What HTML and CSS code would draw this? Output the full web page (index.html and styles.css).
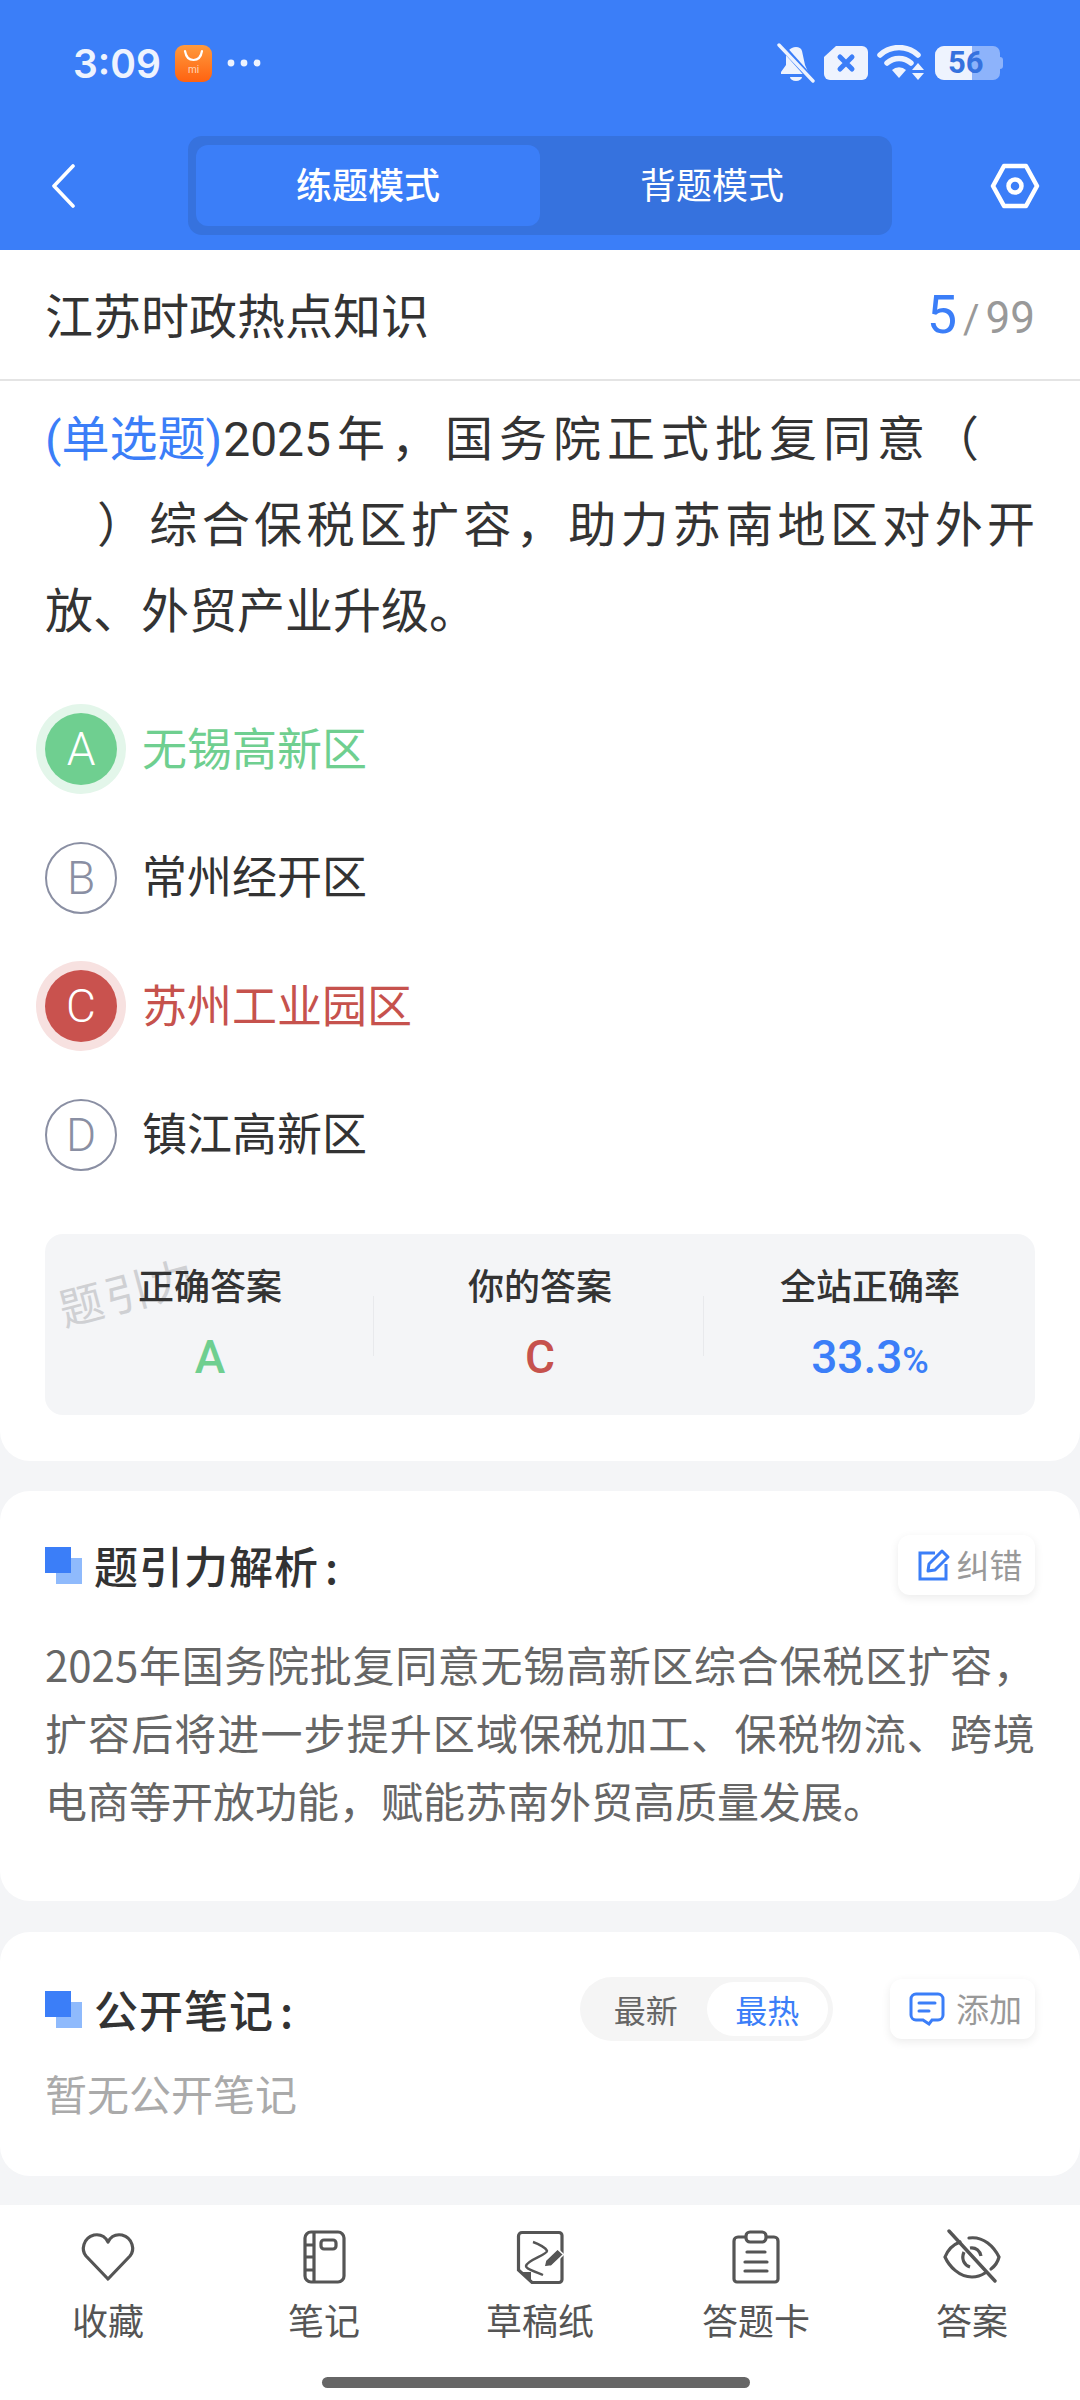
FILE: index.html
```html
<!DOCTYPE html>
<html lang="zh">
  <head>
    <meta charset="utf-8" />
    <title>练题模式</title>
    <link rel="stylesheet" href="styles.css">
  </head>
  <body>
    <div class="page">
      <header class="header">
        <div class="status">
          <div class="status-left">
            <span class="time">3:09</span>
            <svg class="mi-icon" width="37" height="37" viewBox="0 0 37 37">
              <defs>
                <linearGradient id="miGrad" x1="0" y1="0" x2="0" y2="1">
                  <stop offset="0" stop-color="#ff9a3d"/>
                  <stop offset="1" stop-color="#ff6210"/>
                </linearGradient>
              </defs>
              <rect width="37" height="37" rx="9" fill="url(#miGrad)"/>
              <path d="M10 6c1 6 4 9 8.500 9s7.500-3 8.500-9" fill="none" stroke="#fff" stroke-width="2.200" stroke-linecap="round"/>
              <text class="mi-text" x="18.500" y="28" text-anchor="middle">mi</text>
            </svg>
            <svg class="dots" width="34" height="8" viewBox="0 0 34 8"><circle cx="4" cy="4" r="3.400" fill="#eef3fe"/><circle cx="17" cy="4" r="3.400" fill="#eef3fe"/><circle cx="30" cy="4" r="3.400" fill="#eef3fe"/></svg>
          </div>
          <div class="status-right">
            <svg width="38" height="40" viewBox="0 0 38 40">
              <path d="M19 4c-6 0-10 5-10 11v7l-5 7v2h24l4 0-4-9-3-14c-1-3-3-4-6-4z" fill="#eef3fe"/>
              <path d="M13 34a6 4 0 0 0 12 0z" fill="#eef3fe"/>
              <path d="M3 1l33 37" stroke="#3b7ef8" stroke-width="6"/>
              <path d="M2 2l34 36" stroke="#eef3fe" stroke-width="3.400" stroke-linecap="round"/>
            </svg>
            <svg width="44" height="34" viewBox="0 0 44 34">
              <path d="M12 0h26a6 6 0 0 1 6 6v22a6 6 0 0 1-6 6H6a6 6 0 0 1-6-6V11z" fill="#eef3fe"/>
              <path d="M16 11l12 12M28 11L16 23" stroke="#3b7ef8" stroke-width="5" stroke-linecap="round"/>
            </svg>
            <svg width="48" height="36" viewBox="0 0 48 36">
              <path d="M3 10a28 28 0 0 1 38 0" fill="none" stroke="#eef3fe" stroke-width="5.500" stroke-linecap="round"/>
              <path d="M10 18a18 18 0 0 1 24 0" fill="none" stroke="#eef3fe" stroke-width="5.500" stroke-linecap="round"/>
              <path d="M15 25a10 10 0 0 1 14 0l-7 8z" fill="#eef3fe"/>
              <path d="M41 18l6 7H35zM35 28h12l-6 7z" fill="#eef3fe"/>
            </svg>
            <div class="battery">
              <div class="battery-level"></div>
              <span class="battery-num">56</span>
              <div class="battery-cap"></div>
            </div>
          </div>
        </div>
        <div class="nav">
          <svg class="back" width="26" height="44" viewBox="0 0 26 44"><path d="M23 2L4 22l19 20" fill="none" stroke="#fff" stroke-width="3.600" stroke-linecap="round" stroke-linejoin="round"/></svg>
          <div class="tabs">
            <div class="tab tab-active">练题模式</div>
            <div class="tab">背题模式</div>
          </div>
          <svg class="setting" width="50" height="46" viewBox="0 0 50 46">
            <path d="M14 3h22l11 20-11 20H14L3 23z" fill="none" stroke="#fff" stroke-width="4.500" stroke-linejoin="round"/>
            <circle cx="25" cy="23" r="6.500" fill="none" stroke="#fff" stroke-width="4.500"/>
          </svg>
        </div>
      </header>

      <section class="card card-question">
        <div class="title-row">
          <div class="title">江苏时政热点知识</div>
          <div class="count"><span class="count-now">5</span><span class="count-slash">/</span>99</div>
        </div>
        <div class="question">
          <div class="q-line q-justify q-first"><span class="q-tag">(单选题)</span><span class="q-num">2025</span>年，国务院正式批复同意（</div>
          <div class="q-line q-justify q-second">）综合保税区扩容，助力苏南地区对外开</div>
          <div class="q-line">放、外贸产业升级。</div>
        </div>
        <div class="options">
          <div class="option option-right"><span class="letter">A</span><span class="option-text">无锡高新区</span></div>
          <div class="option"><span class="letter">B</span><span class="option-text">常州经开区</span></div>
          <div class="option option-wrong"><span class="letter">C</span><span class="option-text">苏州工业园区</span></div>
          <div class="option"><span class="letter">D</span><span class="option-text">镇江高新区</span></div>
        </div>
        <div class="answer-box">
          <div class="watermark">题引力</div>
          <div class="answer-col">
            <div class="answer-label">正确答案</div>
            <div class="answer-value green">A</div>
          </div>
          <div class="answer-col">
            <div class="answer-label">你的答案</div>
            <div class="answer-value red">C</div>
          </div>
          <div class="answer-col">
            <div class="answer-label">全站正确率</div>
            <div class="answer-value blue">33.3<span class="percent">%</span></div>
          </div>
        </div>
      </section>

      <section class="card card-analysis">
        <div class="section-head">
          <div class="section-icon"><i class="sq-light"></i><i class="sq-dark"></i></div>
          <div class="section-title">题引力解析<span class="colon">:</span></div>
          <div class="mini-btn mini-btn-fix">
            <svg width="34" height="34" viewBox="0 0 34 34">
              <path d="M18 5H3v26h26V16" fill="none" stroke="#3b7ef8" stroke-width="3"/>
              <path d="M11 23l1-7L25 3l6 6-13 13z" fill="none" stroke="#3b7ef8" stroke-width="3" stroke-linejoin="round"/>
            </svg>
            <span class="mini-text">纠错</span>
          </div>
        </div>
        <p class="analysis">2025年国务院批复同意无锡高新区综合保税区扩容，扩容后将进一步提升区域保税加工、保税物流、跨境电商等开放功能，赋能苏南外贸高质量发展。</p>
      </section>

      <section class="card card-notes">
        <div class="section-head">
          <div class="section-icon"><i class="sq-light"></i><i class="sq-dark"></i></div>
          <div class="section-title">公开笔记<span class="colon">:</span></div>
          <div class="switch">
            <span class="switch-item">最新</span>
            <span class="switch-item switch-active">最热</span>
          </div>
          <div class="mini-btn mini-btn-add">
            <svg width="36" height="34" viewBox="0 0 36 34">
              <path d="M7 2h22a5 5 0 0 1 5 5v16a5 5 0 0 1-5 5h-6l-3 4-6-4H7a5 5 0 0 1-5-5V7a5 5 0 0 1 5-5z" fill="none" stroke="#3b7ef8" stroke-width="3"/>
              <path d="M10 11h16M10 19h10" stroke="#3b7ef8" stroke-width="3" stroke-linecap="round"/>
            </svg>
            <span class="mini-text">添加</span>
          </div>
        </div>
        <div class="empty">暂无公开笔记</div>
      </section>

      <nav class="bottom">
        <div class="bottom-items">
          <div class="bottom-item">
            <svg width="56" height="56" viewBox="0 0 56 56">
              <path d="M28 50L6 27C1 21 3 9 14 6c6-1 11 1 14 7 3-6 8-8 14-7 11 3 13 15 8 21z" fill="none" stroke="#555" stroke-width="3.200" stroke-linejoin="round"/>
            </svg>
            <span>收藏</span>
          </div>
          <div class="bottom-item">
            <svg width="56" height="56" viewBox="0 0 56 56">
              <rect x="9" y="3" width="39" height="50" rx="6" fill="none" stroke="#555" stroke-width="3.200"/>
              <path d="M18 3v50M9 16h9M9 28h9M9 41h9" fill="none" stroke="#555" stroke-width="3.200"/>
              <rect x="25" y="11" width="15" height="9" rx="3" fill="none" stroke="#555" stroke-width="3.200"/>
            </svg>
            <span>笔记</span>
          </div>
          <div class="bottom-item">
            <svg width="56" height="56" viewBox="0 0 56 56">
              <path d="M10 3.500h37a3 3 0 0 1 3 3v44a3 3 0 0 1-3 3H20L6.500 41V7a3.500 3.500 0 0 1 3.500-3.500z" fill="none" stroke="#555" stroke-width="3.200"/>
              <path d="M9 43h10v9z" fill="#555"/>
              <path d="M21 13c6 2 13 6 14 9 0 4-20 9-21 15 0 3 10 6 17 9" fill="none" stroke="#555" stroke-width="2.400"/>
              <path d="M32 38l1.500-6.500L45.500 20l6 5.500-12 11.500z" fill="#555" stroke="#fff" stroke-width="1.500"/>
            </svg>
            <span>草稿纸</span>
          </div>
          <div class="bottom-item">
            <svg width="56" height="56" viewBox="0 0 56 56">
              <path d="M17 8h-7a4 4 0 0 0-4 4v38a3 3 0 0 0 3 3h38a3 3 0 0 0 3-3V12a4 4 0 0 0-4-4h-7" fill="none" stroke="#555" stroke-width="3.200" stroke-linecap="round"/>
              <rect x="18" y="3" width="20" height="10" rx="4" fill="none" stroke="#555" stroke-width="3.200"/>
              <path d="M19 23h18M17 33h22M17 42h22" stroke="#555" stroke-width="3.200" stroke-linecap="round"/>
            </svg>
            <span>答题卡</span>
          </div>
          <div class="bottom-item">
            <svg width="58" height="56" viewBox="0 0 58 56">
              <path d="M17 13C9 16 4 23 2 28c4 9 14 20 27 20 5 0 10-2 13-4M26 9c15-2 25 9 30 19-1 4-4 9-8 12" fill="none" stroke="#555" stroke-width="3.200" stroke-linecap="round"/>
              <path d="M21 23c-3 7 0 13 6 15M27 19c6-1 10 3 11 8" fill="none" stroke="#555" stroke-width="3.200"/>
              <path d="M6 2l46 50" stroke="#555" stroke-width="3.400" stroke-linecap="round"/>
            </svg>
            <span>答案</span>
          </div>
        </div>
        <div class="home-bar"></div>
      </nav>
    </div>
  </body>
</html>
```
FILE: styles.css
```css
* {
  box-sizing: border-box;
}

body {
  margin: 0;
  background-color: #f4f5f7;
  font-family: "Noto Sans CJK SC", Roboto, sans-serif;
  color: #333333;
}

.page {
  width: 1080px;
  height: 2400px;
  overflow: hidden;
  display: flex;
  flex-direction: column;
}

.header {
  height: 250px;
  background-color: #3b7ef8;
}

.status {
  height: 136px;
  padding: 44px 80px 0 73px;
  display: flex;
  justify-content: space-between;
  align-items: flex-start;
}

.status-left {
  display: flex;
  align-items: center;
  height: 38px;
  gap: 15px;
}

.time {
  font-family: Inter, Roboto, sans-serif;
  font-size: 39px;
  font-weight: 600;
  color: #eef3fe;
  width: 87px;
}

.mi-text {
  font-family: Roboto, sans-serif;
  font-size: 10px;
  fill: #ffd9bd;
}

.status-right {
  display: flex;
  align-items: center;
  height: 38px;
  gap: 9px;
}

.battery {
  position: relative;
  width: 65px;
  height: 34px;
  border-radius: 9px 7px 7px 9px;
  background-color: #8db3fb;
  margin-left: 1px;
}

.battery-level {
  width: 37px;
  height: 34px;
  border-radius: 9px 0 0 9px;
  background-color: #eef3fe;
}

.battery-num {
  position: absolute;
  left: 13px;
  top: 0;
  line-height: 34px;
  font-family: Roboto, sans-serif;
  font-size: 31px;
  font-weight: 700;
  color: #3672de;
}

.battery-cap {
  position: absolute;
  right: -3px;
  top: 11px;
  width: 3px;
  height: 12px;
  border-radius: 0 3px 3px 0;
  background-color: #8db3fb;
}

.nav {
  height: 99px;
  padding: 0 40px 0 50px;
  display: flex;
  align-items: center;
  justify-content: space-between;
}

.tabs {
  width: 704px;
  height: 99px;
  margin-left: 14px;
  padding: 9px 8px;
  display: flex;
  background-color: #3672de;
  border-radius: 14px;
}

.tab {
  flex: 1;
  display: flex;
  align-items: center;
  justify-content: center;
  padding-bottom: 5px;
  border-radius: 12px;
  font-size: 36px;
  font-weight: 400;
  color: #ffffff;
}

.tab-active {
  background-color: #3b7ef8;
  font-weight: 500;
}

.card {
  background-color: #ffffff;
  border-radius: 30px;
}

.card-question {
  height: 1211px;
  border-radius: 0 0 30px 30px;
}

.title-row {
  height: 131px;
  padding: 0 45px;
  display: flex;
  align-items: center;
  justify-content: space-between;
  border-bottom: 2px solid #e4e4e4;
}

.title {
  margin-bottom: 3px;
  font-size: 48px;
  color: #333333;
}

.count {
  font-family: Roboto, sans-serif;
  font-size: 44px;
  color: #999999;
}

.count-now {
  font-size: 54px;
  color: #3b7ef8;
}

.count-slash {
  margin: 0 6px;
  font-size: 40px;
}

.question {
  padding: 16px 45px 0;
  font-size: 48px;
  line-height: 86px;
  font-family: Roboto, "Noto Sans CJK SC", sans-serif;
}

.q-line {
  height: 86px;
  white-space: pre-wrap;
}

.q-justify {
  text-align: justify;
  text-align-last: justify;
}

.q-first {
  padding-right: 56px;
}

.q-second {
  padding-left: 52px;
}

.q-tag {
  display: inline-block;
  margin-right: -3px;
  color: #3b7ef8;
}

.q-num {
  display: inline-block;
  margin-left: 4px;
}

.options {
  margin-top: 30px;
}

.option {
  height: 128.5px;
  padding-left: 45px;
  display: flex;
  align-items: center;
  gap: 25px;
  font-size: 45px;
  color: #333333;
}

.option-text {
  margin-bottom: 6px;
}

.letter {
  width: 72px;
  height: 72px;
  display: flex;
  align-items: center;
  justify-content: center;
  border-radius: 50%;
  border: 2px solid #8a8fa3;
  font-family: Roboto, sans-serif;
  font-size: 46px;
  font-weight: 300;
  color: #8a8fa3;
}

.option-right {
  color: #6fcf90;
}

.option-right .letter {
  border: 0;
  background-color: #6fcf90;
  box-shadow: 0 0 0 9px #e3f6ea;
  color: #ffffff;
}

.option-wrong {
  color: #c6524d;
}

.option-wrong .letter {
  border: 0;
  background-color: #c9524e;
  box-shadow: 0 0 0 9px #f7e1e0;
  color: #ffffff;
}

.answer-box {
  position: relative;
  height: 181px;
  margin: 35px 45px 0;
  display: flex;
  background-color: #f4f5f7;
  border-radius: 18px;
}

.watermark {
  position: absolute;
  left: 12px;
  top: 24px;
  font-size: 44px;
  letter-spacing: 3px;
  color: #cfd0d3;
  transform: rotate(-15deg);
}

.answer-col {
  position: relative;
  flex: 1;
  display: flex;
  flex-direction: column;
  align-items: center;
  padding-top: 23px;
}

.answer-col + .answer-col::before {
  content: "";
  position: absolute;
  left: -2px;
  top: 62px;
  width: 1px;
  height: 60px;
  background-color: #e8e9ec;
}

.answer-label {
  font-size: 36px;
  line-height: 54px;
  font-weight: 500;
  color: #333333;
}

.answer-value {
  margin-top: 19px;
  font-family: Roboto, sans-serif;
  font-size: 46px;
  line-height: 54px;
  font-weight: 500;
}

.green {
  color: #6fcf90;
}

.red {
  color: #c6524d;
}

.blue {
  color: #3b7ef8;
}

.percent {
  font-size: 36px;
}

.card-analysis {
  height: 410px;
  margin-top: 30px;
  padding: 0 45px;
}

.section-head {
  height: 60px;
  display: flex;
  align-items: center;
}

.card-analysis .section-head {
  margin-top: 44px;
}

.card-notes .section-head {
  margin-top: 47px;
}

.section-icon {
  position: relative;
  width: 37px;
  height: 37px;
  margin-right: 12px;
}

.section-icon i {
  position: absolute;
  width: 26px;
  height: 26px;
}

.sq-dark {
  left: 0;
  top: 0;
  background-color: #3b7ef8;
}

.sq-light {
  left: 11px;
  top: 11px;
  background-color: #8fbafc;
}

.section-title {
  flex: 1;
  font-size: 44px;
  font-weight: 500;
  letter-spacing: 1px;
  color: #333333;
}

.colon {
  margin-left: 6px;
}

.mini-btn {
  height: 60px;
  display: flex;
  align-items: center;
  justify-content: center;
  border-radius: 12px;
  background-color: #ffffff;
  box-shadow: 0 3px 10px rgba(0, 0, 0, 0.08);
  font-size: 33px;
  color: #999999;
}

.mini-text {
  margin-bottom: 3px;
}

.mini-btn-fix {
  width: 137px;
  gap: 6px;
  padding-left: 6px;
}

.mini-btn-add {
  width: 145px;
  gap: 11px;
  padding-left: 6px;
}

.analysis {
  margin: 35px 0 0;
  font-size: 42px;
  line-height: 68px;
  text-align: justify;
  color: #666666;
}

.card-notes {
  height: 244px;
  margin-top: 31px;
  padding: 0 45px;
}

.switch {
  width: 253px;
  height: 64px;
  margin-right: 57px;
  padding: 5px;
  display: flex;
  border-radius: 32px;
  background-color: #f5f5f5;
}

.switch-item {
  flex: 1;
  display: flex;
  align-items: center;
  justify-content: center;
  border-radius: 27px;
  font-size: 32px;
  color: #666666;
}

.switch-active {
  background-color: #ffffff;
  color: #3b7ef8;
}

.empty {
  margin-top: 24px;
  font-size: 42px;
  line-height: 60px;
  color: #aaaaaa;
}

.bottom {
  height: 195px;
  margin-top: 29px;
  background-color: #ffffff;
}

.bottom-items {
  display: flex;
  padding-top: 24px;
}

.bottom-item {
  flex: 1;
  display: flex;
  flex-direction: column;
  align-items: center;
  gap: 8px;
  font-size: 36px;
  line-height: 52px;
  color: #555555;
}

.home-bar {
  width: 428px;
  height: 11px;
  margin: 32px 0 0 322px;
  border-radius: 6px;
  background-color: #666666;
}
```
